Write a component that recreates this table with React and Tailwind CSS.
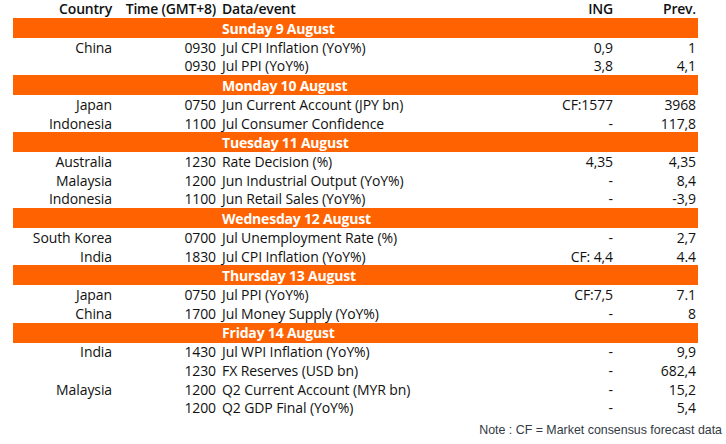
const days = [
  {
    title: 'Sunday 9 August',
    rows: [
      ['China', '0930', 'Jul CPI Inflation (YoY%)', '0,9', '1'],
      ['', '0930', 'Jul PPI (YoY%)', '3,8', '4,1'],
    ],
  },
  {
    title: 'Monday 10 August',
    rows: [
      ['Japan', '0750', 'Jun Current Account (JPY bn)', 'CF:1577', '3968'],
      ['Indonesia', '1100', 'Jul Consumer Confidence', '-', '117,8'],
    ],
  },
  {
    title: 'Tuesday 11 August',
    rows: [
      ['Australia', '1230', 'Rate Decision (%)', '4,35', '4,35'],
      ['Malaysia', '1200', 'Jun Industrial Output (YoY%)', '-', '8,4'],
      ['Indonesia', '1100', 'Jun Retail Sales (YoY%)', '-', '-3,9'],
    ],
  },
  {
    title: 'Wednesday 12 August',
    rows: [
      ['South Korea', '0700', 'Jul Unemployment Rate (%)', '-', '2,7'],
      ['India', '1830', 'Jul CPI Inflation (YoY%)', 'CF: 4,4', '4.4'],
    ],
  },
  {
    title: 'Thursday 13 August',
    rows: [
      ['Japan', '0750', 'Jul PPI (YoY%)', 'CF:7,5', '7.1'],
      ['China', '1700', 'Jul Money Supply (YoY%)', '-', '8'],
    ],
  },
  {
    title: 'Friday 14 August',
    rows: [
      ['India', '1430', 'Jul WPI Inflation (YoY%)', '-', '9,9'],
      ['', '1230', 'FX Reserves (USD bn)', '-', '682,4'],
      ['Malaysia', '1200', 'Q2 Current Account (MYR bn)', '-', '15,2'],
      ['', '1200', 'Q2 GDP Final (YoY%)', '-', '5,4'],
    ],
  },
];

const grid = 'grid grid-cols-[99px_104px_1fr_110px_83px] items-center';

export default function App() {
  return (
    <div className="w-[726px] h-[444px] bg-white text-[#111] text-[14px] font-['Open_Sans',sans-serif] overflow-hidden">
      <div className="ml-[13px] w-[685px]">
        <div className={`${grid} h-[18px] font-semibold leading-none tracking-[-0.2px]`}>
          <div className="text-right">Country</div>
          <div className="text-right">Time (GMT+8)</div>
          <div className="pl-[6px]">Data/event</div>
          <div className="text-right pr-[2px]">ING</div>
          <div className="text-right pr-[2px]">Prev.</div>
        </div>

        {days.map((d) => (
          <div key={d.title}>
            <div className={`${grid} h-[20px] bg-[#ff6200] text-white font-bold leading-none tracking-[-0.2px]`}>
              <div className="col-start-3 col-span-3 pl-[6px] pt-[1px] whitespace-nowrap">{d.title}</div>
            </div>
            {d.rows.map((r, i) => (
              <div key={i} className={`${grid} h-[18.6px] leading-none whitespace-nowrap tracking-[-0.1px]`}>
                <div className="text-right pt-[1px]">{r[0]}</div>
                <div className="text-right pt-[1px]">{r[1]}</div>
                <div className="pl-[6px] pt-[1px]">{r[2]}</div>
                <div className="text-right pr-[2px] pt-[1px]">{r[3]}</div>
                <div className="text-right pr-[2px] pt-[1px]">{r[4]}</div>
              </div>
            ))}
          </div>
        ))}
      </div>

      <div className="mt-[4px] pr-[4px] text-right text-[12.4px] text-[#333a44] font-['Liberation_Sans',sans-serif]">
        Note : CF = Market consensus forecast data
      </div>
    </div>
  );
}
